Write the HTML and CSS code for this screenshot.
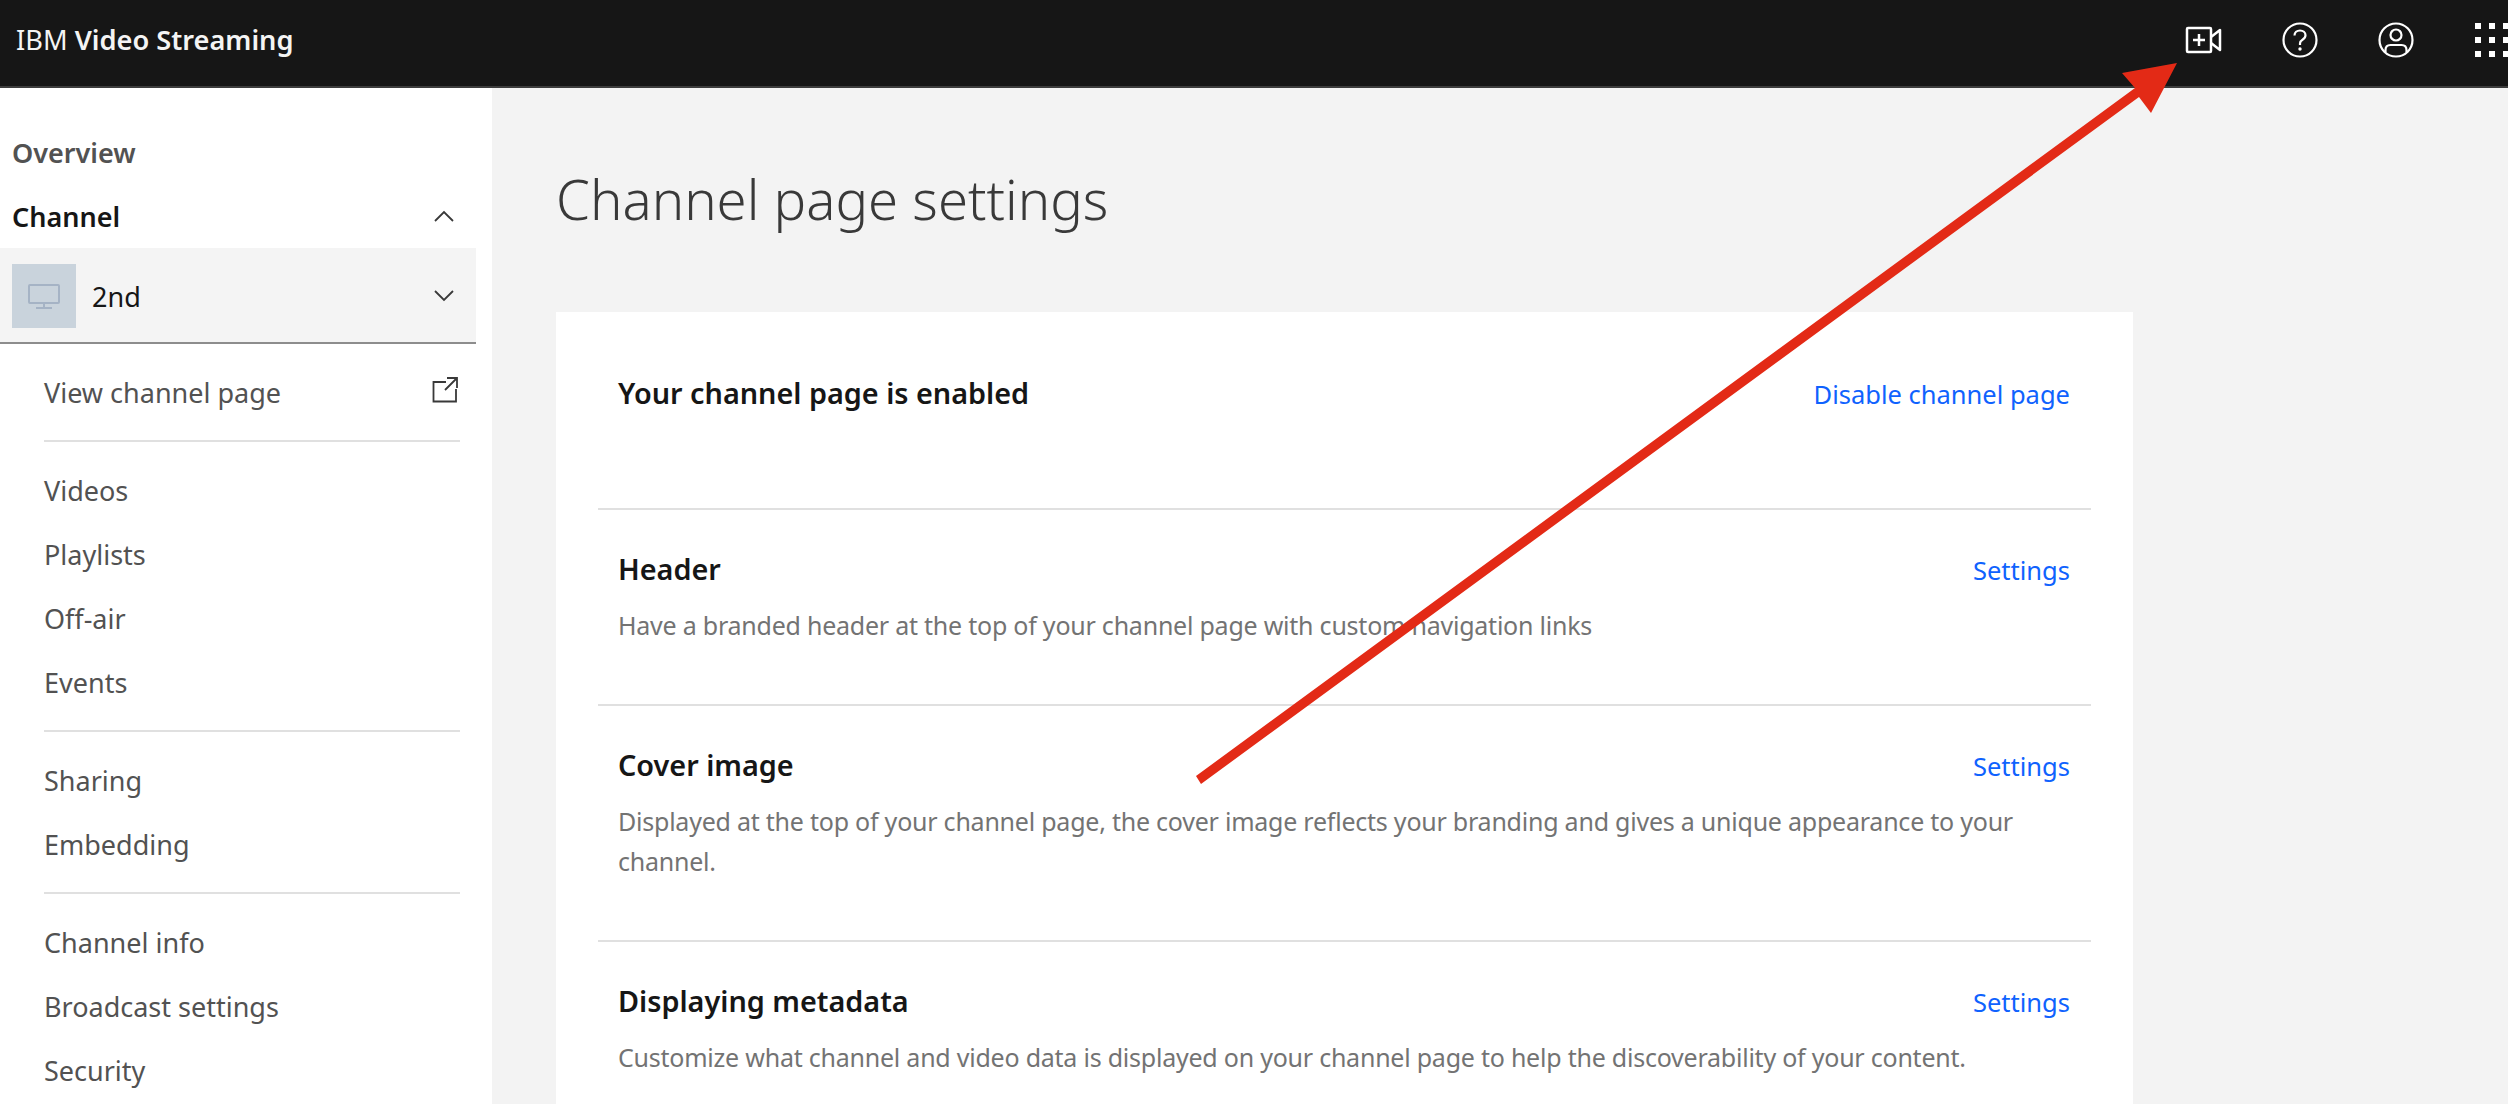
FILE: index.html
```html
<!DOCTYPE html>
<html lang="en">
<head>
  <meta charset="UTF-8">
  <title>Channel page settings</title>
  <link rel="stylesheet" href="styles.css">
</head>
<body>
  <header class="top-bar">
    <div class="brand">IBM <strong>Video Streaming</strong></div>
    <div class="top-actions">
      <button class="top-button" aria-label="New video">
        <svg class="top-icon" viewBox="0 0 40 40" fill="none" stroke="#fff" stroke-width="2.5" stroke-linejoin="round">
          <rect x="3" y="8" width="24" height="24" rx="1"/>
          <path d="M27 17l9-7v20l-9-7"/>
          <path d="M9 20h12M15 14v12"/>
        </svg>
      </button>
      <button class="top-button" aria-label="Help">
        <svg class="top-icon" viewBox="0 0 40 40" fill="none" stroke="#fff" stroke-width="2.2">
          <circle cx="20" cy="20" r="16.5"/>
          <path d="M14.5 15.5c0-3 2.4-5 5.5-5s5.500 2 5.500 4.800c0 2.200-1.200 3.300-3 4.400-1.700 1-2.500 2-2.500 3.800v1.500"/>
          <circle cx="20" cy="29" r="1.700" fill="#fff" stroke="none"/>
        </svg>
      </button>
      <button class="top-button" aria-label="Account">
        <svg class="top-icon" viewBox="0 0 40 40" fill="none" stroke="#fff" stroke-width="2.2">
          <circle cx="20" cy="20" r="16.5"/>
          <circle cx="20" cy="15" r="5.500"/>
          <path d="M9.500 32v-2c0-3 2-5 5-5h11c3 0 5 2 5 5v2"/>
        </svg>
      </button>
      <button class="top-button" aria-label="Apps">
        <svg class="top-icon" viewBox="0 0 40 40" fill="#fff">
          <rect x="3" y="3" width="6" height="6"/><rect x="17" y="3" width="6" height="6"/><rect x="31" y="3" width="6" height="6"/>
          <rect x="3" y="17" width="6" height="6"/><rect x="17" y="17" width="6" height="6"/><rect x="31" y="17" width="6" height="6"/>
          <rect x="3" y="31" width="6" height="6"/><rect x="17" y="31" width="6" height="6"/><rect x="31" y="31" width="6" height="6"/>
        </svg>
      </button>
    </div>
  </header>

  <div class="page">
    <aside class="sidebar">
      <div class="side-head overview">Overview</div>
      <div class="side-head channel">
        <span>Channel</span>
        <svg class="chevron" viewBox="0 0 20 12" fill="none" stroke="#393939" stroke-width="1.800"><path d="M1 11l9-9 9 9"/></svg>
      </div>
      <div class="channel-picker">
        <div class="channel-thumb">
          <svg class="thumb-icon" viewBox="0 0 32 25" fill="none" stroke="#a5b3c5" stroke-width="2">
            <rect x="1" y="1" width="30" height="18" rx="1"/>
            <path d="M16 19v4M8 24h16"/>
          </svg>
        </div>
        <span class="channel-name">2nd</span>
        <svg class="chevron" viewBox="0 0 20 12" fill="none" stroke="#393939" stroke-width="1.800"><path d="M1 1l9 9 9-9"/></svg>
      </div>

      <ul class="nav-group first-group">
        <li class="nav-item">
          <span>View channel page</span>
          <svg class="ext-icon" viewBox="0 0 26 26" fill="none" stroke="#393939" stroke-width="1.800"><path d="M14 5H1.500v19.500H24V12"/><path d="M15 1h10v10M25 1L13 13"/></svg>
        </li>
      </ul>
      <ul class="nav-group">
        <li class="nav-item">Videos</li>
        <li class="nav-item">Playlists</li>
        <li class="nav-item">Off-air</li>
        <li class="nav-item">Events</li>
      </ul>
      <ul class="nav-group">
        <li class="nav-item">Sharing</li>
        <li class="nav-item">Embedding</li>
      </ul>
      <ul class="nav-group">
        <li class="nav-item">Channel info</li>
        <li class="nav-item">Broadcast settings</li>
        <li class="nav-item">Security</li>
      </ul>
    </aside>

    <main class="content">
      <h1 class="page-title">Channel page settings</h1>
      <section class="card">
        <div class="card-row enabled-row">
          <div class="row-top">
            <h2 class="row-title">Your channel page is enabled</h2>
            <a class="row-link" href="#">Disable channel page</a>
          </div>
        </div>
        <div class="card-row">
          <div class="row-top">
            <h2 class="row-title">Header</h2>
            <a class="row-link" href="#">Settings</a>
          </div>
          <p class="row-text">Have a branded header at the top of your channel page with custom navigation links</p>
        </div>
        <div class="card-row">
          <div class="row-top">
            <h2 class="row-title">Cover image</h2>
            <a class="row-link" href="#">Settings</a>
          </div>
          <p class="row-text">Displayed at the top of your channel page, the cover image reflects your branding and gives a unique appearance to your channel.</p>
        </div>
        <div class="card-row">
          <div class="row-top">
            <h2 class="row-title">Displaying metadata</h2>
            <a class="row-link" href="#">Settings</a>
          </div>
          <p class="row-text">Customize what channel and video data is displayed on your channel page to help the discoverability of your content.</p>
        </div>
      </section>
    </main>
  </div>

  <svg class="arrow" viewBox="0 0 2508 1104">
    <polygon points="1196,776 1201,784 2139,97 2151,113 2177,63 2122,73 2135,88" fill="#e32a16"/>
  </svg>
</body>
</html>
```

FILE: styles.css
```css
html, body {
  height: 100%;
}

body {
  margin: 0;
  height: 1104px;
  overflow: hidden;
  position: relative;
  font-family: "Noto Sans", sans-serif;
  background-color: #f3f3f3;
  color: #161616;
}

.top-bar {
  height: 86px;
  border-bottom: 2px solid #3d3d3d;
  background-color: #161616;
  display: flex;
  align-items: center;
  justify-content: space-between;
  color: #f4f4f4;
}

.brand {
  padding: 0 0 6px 16px;
  font-size: 27.2px;
  line-height: 40px;
}

.brand strong {
  font-weight: 600;
}

.top-actions {
  display: flex;
  margin-right: -32px;
}

.top-button {
  width: 96px;
  height: 86px;
  padding: 0 0 6px;
  border: none;
  background: none;
  display: flex;
  align-items: center;
  justify-content: center;
}

.top-icon {
  width: 40px;
  height: 40px;
}

.page {
  display: flex;
  height: 1016px;
  overflow: hidden;
}

.sidebar {
  width: 492px;
  flex-shrink: 0;
  background-color: #fff;
  padding-top: 32px;
  overflow: hidden;
}

.side-head {
  width: 476px;
  height: 64px;
  box-sizing: border-box;
  padding: 0 22px 0 12px;
  display: flex;
  align-items: center;
  justify-content: space-between;
  font-size: 27px;
  font-weight: 600;
}

.overview {
  color: #525252;
}

.chevron {
  width: 20px;
  height: 12px;
  flex-shrink: 0;
}

.channel-picker {
  width: 476px;
  height: 96px;
  box-sizing: border-box;
  padding: 2px 22px 0 12px;
  background-color: #f4f4f4;
  border-bottom: 2px solid #8d8d8d;
  display: flex;
  align-items: center;
}

.channel-thumb {
  width: 64px;
  height: 64px;
  background-color: #c9d3dc;
  display: flex;
  align-items: center;
  justify-content: center;
}

.thumb-icon {
  width: 32px;
  height: 25px;
}

.channel-name {
  margin-left: 16px;
  flex: 1;
  font-size: 27px;
}

.nav-group {
  list-style: none;
  width: 416px;
  margin: 0 0 0 44px;
  padding: 16px 0;
  border-top: 2px solid #e0e0e0;
}

.first-group {
  border-top: none;
}

.nav-item {
  height: 64px;
  display: flex;
  align-items: center;
  justify-content: space-between;
  font-size: 27px;
  color: #525252;
}

.ext-icon {
  width: 26px;
  height: 26px;
  margin-right: 2px;
  margin-top: -4px;
}

.content {
  flex: 1;
  padding-left: 64px;
  overflow: hidden;
}

.page-title {
  margin: 0;
  height: 224px;
  box-sizing: border-box;
  padding-top: 79px;
  font-size: 54.5px;
  line-height: 64px;
  font-weight: 300;
  color: #393939;
}

.card {
  width: 1577px;
  box-sizing: border-box;
  padding: 0 42px;
  background-color: #fff;
}

.card-row {
  padding: 38px 21px 59px 20px;
  border-bottom: 2px solid #e0e0e0;
}

.enabled-row {
  padding: 60px 21px 94px 20px;
}

.row-top {
  display: flex;
  justify-content: space-between;
  align-items: center;
}

.row-title {
  margin: 0;
  font-size: 28.8px;
  line-height: 42px;
  font-weight: 600;
}

.row-link {
  margin-top: 2px;
  font-size: 25.5px;
  color: #0f62fe;
  text-decoration: none;
}

.row-text {
  margin: 15px 0 0;
  font-size: 25px;
  line-height: 40px;
  letter-spacing: -0.23px;
  color: #737373;
}

.arrow {
  position: absolute;
  left: 0;
  top: 0;
  width: 2508px;
  height: 1104px;
  pointer-events: none;
}
```
